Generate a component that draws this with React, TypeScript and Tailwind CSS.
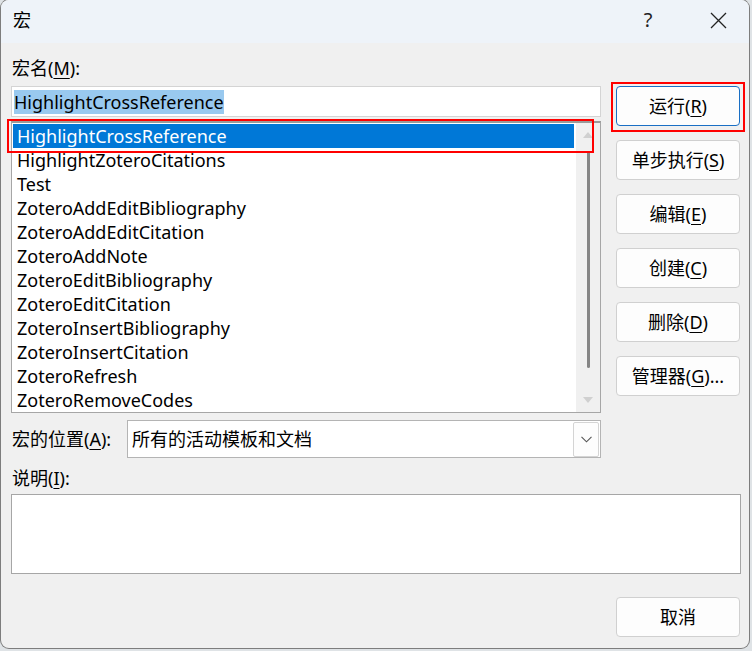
import React from "react";

const items = [
  "HighlightCrossReference",
  "HighlightZoteroCitations",
  "Test",
  "ZoteroAddEditBibliography",
  "ZoteroAddEditCitation",
  "ZoteroAddNote",
  "ZoteroEditBibliography",
  "ZoteroEditCitation",
  "ZoteroInsertBibliography",
  "ZoteroInsertCitation",
  "ZoteroRefresh",
  "ZoteroRemoveCodes",
];

function Btn({ label, k, tail, focused }: { label: string; k: string; tail?: string; focused?: boolean }) {
  return (
    <div
      className={
        "h-[40px] w-[124px] rounded-[4px] flex items-center justify-center text-[18px] leading-[24px] text-black " +
        (focused ? "border border-[#1a6fc4] bg-[#fdfdfd]" : "border border-[#d0d0d0] bg-[#fdfdfd]")
      }
    >
      <span>
        {label}(<span className="underline underline-offset-[3px]">{k}</span>){tail}
      </span>
    </div>
  );
}

export default function App() {
  return (
    <div
      className="w-[752px] h-[651px] bg-[#dfe3e6] overflow-hidden pl-[1px]"
      style={{ fontFamily: '"Noto Sans", "Noto Sans CJK SC", sans-serif' }}
    >
      <div className="relative w-[748px] h-[648px] rounded-[8px] overflow-hidden bg-[#f0f0f0] shadow-[0_0_0_1px_#7d7d7d]">
        {/* Title bar */}
        <div className="h-[43px] bg-[#eef3f9] flex items-center pb-[3px]">
          <div className="pl-[12px] text-[18px] leading-[24px] text-black">宏</div>
          <div className="ml-auto flex items-center h-full">
            <div className="w-[46px] h-full flex items-center justify-center text-[20px] text-[#222]">?</div>
            <div className="w-[24px]" />
            <div className="w-[46px] h-full flex items-center justify-center">
              <svg width="17" height="17" viewBox="0 0 17 17">
                <path d="M1 1 L16 16 M16 1 L1 16" stroke="#222" strokeWidth="1.3" fill="none" />
              </svg>
            </div>
            <div className="w-[8px]" />
          </div>
        </div>

        {/* Body */}
        <div className="pl-[10px] text-black text-[18px] leading-[24px]">
          <div className="flex mt-[13px]">
            {/* Left column */}
            <div className="w-[590px] flex flex-col">
              <div className="h-[24px] pl-[1px]">
                宏名(<span className="underline underline-offset-[3px]">M</span>):
              </div>
              <div className="mt-[6px] h-[31px] bg-white border border-[#d4d4d4] flex items-center pl-[2px]">
                <span className="bg-[#99c9ef] h-[24px] leading-[24px]">HighlightCrossReference</span>
              </div>
              <div className="mt-[4px] h-[292px] bg-white border border-[#a6a6a6] border-t-2 border-t-[#9a9a9a] flex">
                <div className="flex-1 pl-[1px] pt-[1px]">
                  {items.map((it, i) => (
                    <div
                      key={it}
                      className={
                        "h-[24px] leading-[24px] pl-[4px] " + (i === 0 ? "bg-[#0078d7] text-white" : "")
                      }
                    >
                      {it}
                    </div>
                  ))}
                </div>
                <div className="w-[24px] bg-[#f0f0f0] flex flex-col items-center ml-[2px]">
                  <svg width="12" height="8" viewBox="0 0 12 8" className="mt-[8px]">
                    <path d="M1 7 L6 1 L11 7 Z" fill="#d0d0d0" />
                  </svg>
                  <div className="mt-[12px] w-[3px] h-[217px] rounded-full bg-[#858585]" />
                  <svg width="12" height="8" viewBox="0 0 12 8" className="mt-[28px]">
                    <path d="M1 1 L6 7 L11 1 Z" fill="#d0d0d0" />
                  </svg>
                </div>
              </div>
              <div className="mt-[7px] flex items-center h-[38px]">
                <div className="w-[116px] pl-[1px]">
                  宏的位置(<span className="underline underline-offset-[3px]">A</span>):
                </div>
                <div className="flex-1 h-[38px] bg-white border border-[#b4b4b4] flex items-center pl-[4px] pr-[1px]">
                  <span className="flex-1">所有的活动模板和文档</span>
                  <div className="w-[26px] h-[35px] border border-[#d4d4d4] rounded-[2px] bg-[#fdfdfd] flex items-center justify-center">
                    <svg width="11" height="7" viewBox="0 0 11 7">
                      <path d="M0.5 0.8 L5.5 5.8 L10.5 0.8" stroke="#555" strokeWidth="1.1" fill="none" />
                    </svg>
                  </div>
                </div>
              </div>
            </div>

            {/* Right column */}
            <div className="ml-[15px] pt-[30px] flex flex-col gap-[14px]">
              <Btn label="运行" k="R" focused />
              <Btn label="单步执行" k="S" />
              <Btn label="编辑" k="E" />
              <Btn label="创建" k="C" />
              <Btn label="删除" k="D" />
              <Btn label="管理器" k="G" tail="..." />
            </div>
          </div>

          <div className="mt-[8px] h-[24px] pl-[1px]">
            说明(<span className="underline underline-offset-[3px]">I</span>):
          </div>
          <div className="mt-[4px] w-[730px] h-[80px] bg-white border border-[#a6a6a6]" />
          <div className="mt-[23px] flex">
            <div className="ml-[605px] h-[40px] w-[124px] rounded-[4px] border border-[#d0d0d0] bg-[#fdfdfd] flex items-center justify-center">
              取消
            </div>
          </div>
        </div>

        {/* Red annotation rectangles */}
        <div className="absolute left-[6px] top-[119px] w-[587px] h-[34px] border-2 border-[#ff0000] pointer-events-none" />
        <div className="absolute left-[610px] top-[82px] w-[134px] h-[50px] border-2 border-[#ff0000] pointer-events-none" />
      </div>
    </div>
  );
}
